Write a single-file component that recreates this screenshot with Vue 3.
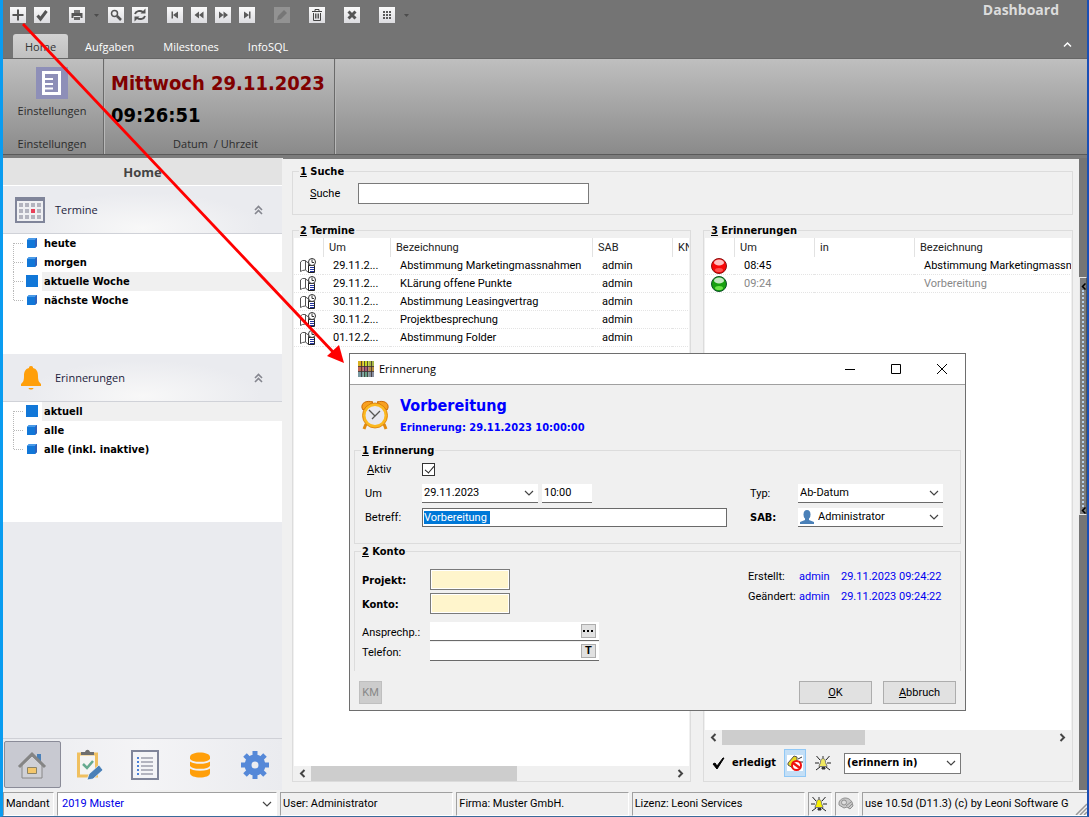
<script setup>
import { ref, onMounted } from 'vue'

const tools = [
  { label: 'Neu', d: 'M2.5 8h11M8 2.5v11', w: 2 },
  { label: 'Speichern', d: 'M3.5 8.5l3 3.5L12.5 4', w: 3 },
  { label: 'Drucken', kind: 'print', group: true },
  { label: 'Druckoptionen', kind: 'caret' },
  { label: 'Suchen', kind: 'search' },
  { label: 'Aktualisieren', kind: 'refresh' },
  { label: 'Erster', f: 'M4.5 4.500h1.500v7H4.500zM11 4.500v7L6 8z', group: true },
  { label: 'Zurück', f: 'M8 4.500v7L3.500 8zM12.500 4.500v7L8 8z' },
  { label: 'Vor', f: 'M4 4.500L8.500 8 4 11.500zM8.500 4.500L13 8l-4.500 3.500z' },
  { label: 'Letzter', f: 'M11.500 4.500H10v7h1.500zM5 4.500v7L10 8z' },
  { label: 'Bearbeiten', f: 'M3 13l1-4 6-6 3 3-6 6z', group: true, off: true },
  { label: 'Löschen', kind: 'trash', group: true },
  { label: 'Abbrechen', d: 'M4.5 4.5l7 7M11.5 4.5l-7 7', w: 3, group: true },
  { label: 'Raster', f: 'M4 4h2v2H4zM7 4h2v2H7zM10 4h2v2h-2zM4 7h2v2H4zM7 7h2v2H7zM10 7h2v2h-2zM4 10h2v2H4zM7 10h2v2H7zM10 10h2v2h-2z', group: true },
  { label: 'Rasteroptionen', kind: 'caret' },
]
const tabs = ['Home', 'Aufgaben', 'Milestones', 'InfoSQL']
const sections = [
  { title: 'Termine', icon: 'calendar', items: ['heute', 'morgen', 'aktuelle Woche', 'nächste Woche'], active: 2 },
  { title: 'Erinnerungen', icon: 'bell', items: ['aktuell', 'alle', 'alle (inkl. inaktive)'], active: 0 },
]
const termine = [
  ['29.11.2...', 'Abstimmung Marketingmassnahmen'],
  ['29.11.2...', 'KLärung offene Punkte'],
  ['30.11.2...', 'Abstimmung Leasingvertrag'],
  ['30.11.2...', 'Projektbesprechung'],
  ['01.12.2...', 'Abstimmung Folder'],
]
const dots = [0, 1, 2]
const cols = [0, 1, 2, 3]
const plaid = ['#d8b020', '#c8d820', '#a8b848', '#c06858', '#a85878', '#b89040', '#7898a0', '#68a088', '#8890a0']

const subject = ref('Vorbereitung ')
const subjectInput = ref(null)
onMounted(() => {
  subjectInput.value.focus()
  subjectInput.value.select()
})
</script>

<template>
  <div class="window">
    <header class="top">
      <div class="toolbar">
        <button
          v-for="t in tools"
          :key="t.label"
          :aria-label="t.label"
          :class="['tool', { group: t.group, off: t.off, caret: t.kind === 'caret' }]"
        >
          <svg v-if="t.kind === 'caret'" width="7" height="16" viewBox="0 0 7 16"><path d="M1 7h5L3.500 10z" fill="#4c4c4c" /></svg>
          <svg v-else width="16" height="16" viewBox="0 0 16 16">
            <path v-if="t.d" :d="t.d" :stroke-width="t.w" fill="none" stroke="#555" />
            <path v-else-if="t.f" :d="t.f" :fill="t.off ? '#767676' : '#5a5a5a'" />
            <g v-else-if="t.kind === 'print'">
              <path d="M5 3h6v3H5z" fill="#777" /><path d="M2.500 6h11v5h-2V9h-7v2h-2z" fill="#555" /><path d="M5 10h6v3H5z" fill="#666" />
            </g>
            <g v-else-if="t.kind === 'search'" fill="none" stroke="#555">
              <circle cx="6.500" cy="6.500" r="3" stroke-width="1.500" /><path d="M9 9l4 4" stroke-width="2.500" />
            </g>
            <g v-else-if="t.kind === 'refresh'" fill="none" stroke="#555" stroke-width="2">
              <path d="M3 7c1-3 5-4 8-2M13 9c-1 3-5 4-8 2" /><path d="M13.500 1.500v5h-5zM2.500 14.500v-5h5z" fill="#555" stroke="none" />
            </g>
            <g v-else fill="none" stroke="#444">
              <path d="M3 4.500h10M6 4V2.500h4V4M4.500 6v7.500h7V6" /><path d="M6.500 6.500v5M8 6.500v5M9.500 6.500v5" stroke-width=".9" />
            </g>
          </svg>
        </button>
        <h1>Dashboard</h1>
      </div>
      <nav class="tabs">
        <button v-for="(t, i) in tabs" :key="t" :class="{ active: i === 0 }">{{ t }}</button>
        <button class="fold" aria-label="Menüband reduzieren">
          <svg width="9" height="7" viewBox="0 0 9 7"><path d="M1 5.500l3.500-3.500L8 5.500" fill="none" stroke="#fff" stroke-width="1.500" /></svg>
        </button>
      </nav>
      <div class="ribbon">
        <div class="rgroup">
          <button class="settings">
            <svg width="32" height="32" viewBox="0 0 32 32">
              <path d="M0 0h32v32H0z" fill="#8e8fb8" />
              <path d="M7.500 5.500h16v21h-16z" fill="none" stroke="#fff" stroke-width="3" />
              <path d="M9 12h8M9 17h8M9 21.500h8" fill="none" stroke="#fff" stroke-width="2" />
            </svg>
            <span>Einstellungen</span>
          </button>
          <p>Einstellungen</p>
        </div>
        <div class="rgroup clock">
          <strong class="date">Mittwoch 29.11.2023</strong>
          <strong>09:26:51</strong>
          <p>Datum&nbsp; / Uhrzeit</p>
        </div>
      </div>
    </header>

    <div class="body">
      <aside class="side">
        <h2>Home</h2>
        <section v-for="s in sections" :key="s.title">
          <div class="shead">
            <svg v-if="s.icon === 'calendar'" width="30" height="28" viewBox="0 0 30 28">
              <path d="M1 2h28v24H1z" fill="#eff0f3" stroke="#80859a" stroke-width="2" /><path d="M0 1h30v4H0z" fill="#80859a" />
              <g v-for="r in dots" :key="r">
                <rect v-for="c in cols" :key="c" :x="4 + c * 6" :y="7 + r * 6" width="4" height="4" :fill="r === 1 && c === 2 ? '#e8405a' : '#b3b4bf'" />
              </g>
            </svg>
            <svg v-else width="30" height="28" viewBox="0 0 30 28">
              <path d="M16 2c-2 0-2 1-2 2-4 1-5 4-5 8 0 5-1 6-3 8v2h20v-2c-2-2-3-3-3-8 0-4-1-7-5-8 0-1 0-2-2-2z" fill="#ff9f0a" />
              <path d="M13.500 24h5c-.5 2-4.500 2-5 0z" fill="#ff9f0a" />
            </svg>
            <span>{{ s.title }}</span>
            <button :aria-label="s.title + ' einklappen'">
              <svg width="9" height="10" viewBox="0 0 9 10"><path d="M1 5l3.500-3.500L8 5M1 9l3.500-3.500L8 9" fill="none" stroke="#85868f" stroke-width="1.600" /></svg>
            </button>
          </div>
          <ul>
            <li v-for="(it, i) in s.items" :key="it">
              <svg width="13" height="19" viewBox="0 0 13 19">
                <path d="M1 9.500h9" stroke="#b8b8b8" stroke-dasharray="1 1" />
                <path :d="`M.5 ${i === 0 ? 9 : 0}V${i === s.items.length - 1 ? 10 : 19}`" stroke="#b8b8b8" stroke-dasharray="1 1" />
              </svg>
              <svg width="12" height="19" viewBox="0 0 12 19">
                <path v-if="i === s.active" d="M0 3h12v12H0z" fill="#1177d8" />
                <g v-else><path d="M1 6l2-2h8v8l-2 2H1z" fill="#1177d8" /><path d="M1 6l2-2h8L9 6z" fill="#4a9ae8" /><path d="M9 6l2-2v8l-2 2z" fill="#2f62bd" /></g>
              </svg>
              <a href="#" :class="{ active: i === s.active }">{{ it }}</a>
            </li>
          </ul>
        </section>
        <nav class="modules">
          <button class="active" aria-label="Home">
            <svg width="30" height="30" viewBox="0 0 30 30">
              <path d="M20 4h4v8l-4-3z" fill="#4a80b8" /><path d="M5 15v13h20V15L15 6z" fill="#cfd0d6" stroke="#888" />
              <path d="M2 17L15 4l13 13" fill="none" stroke="#858585" stroke-width="3" /><path d="M10.500 17.500h9v6h-9z" fill="#f4c76c" stroke="#8c8468" />
            </svg>
          </button>
          <button aria-label="Aufgaben">
            <svg width="30" height="32" viewBox="0 0 30 32">
              <path d="M3.500 5h18v22h-18z" fill="#f4f4f4" stroke="#f0c060" stroke-width="3" /><path d="M6 3h4c1-3 4-3 5 0h4v3H6z" fill="#6e6e6e" />
              <path d="M8 15l4 4 6-7" fill="none" stroke="#66aa90" stroke-width="2.500" /><path d="M12 31l2-6 10-9 4 5-10 9z" fill="#4a80b8" stroke="#fff" stroke-width=".7" />
            </svg>
          </button>
          <button aria-label="Listen">
            <svg width="28" height="30" viewBox="0 0 28 30">
              <path d="M1 1h26v28H1z" fill="#f4f4f7" stroke="#80859a" stroke-width="2" />
              <path d="M6 8h2M6 12h2M6 16h2M6 20h2M6 24h2" stroke="#4a80d8" stroke-width="2" /><path d="M10 8h12M10 12h12M10 16h12M10 20h12M10 24h12" stroke="#b3b4bf" stroke-width="2" />
            </svg>
          </button>
          <button aria-label="Datenbank">
            <svg width="22" height="26" viewBox="0 0 22 26">
              <path d="M1 5c0-6 20-6 20 0v16c0 6-20 6-20 0z" fill="#ff9f0a" /><path d="M0 7c2 5 20 5 22 0M0 14c2 5 20 5 22 0" fill="none" stroke="#f1f1f4" stroke-width="2" />
            </svg>
          </button>
          <button aria-label="Optionen">
            <svg width="28" height="28" viewBox="0 0 28 28">
              <circle cx="14" cy="14" r="7" fill="none" stroke="#5588d8" stroke-width="7" />
              <g stroke="#5588d8" stroke-width="5"><path d="M14 0v5M14 23v5M0 14h5M23 14h5M4 4l4 4M20 20l4 4M24 4l-4 4M8 20l-4 4" /></g>
            </svg>
          </button>
        </nav>
      </aside>

      <main>
        <fieldset class="search">
          <legend><u>1</u> Suche</legend>
          <div class="searchrow">
            <label for="suche"><u>S</u>uche</label>
            <input id="suche" type="text" />
          </div>
        </fieldset>

        <fieldset class="panel">
          <legend><u>2</u> Termine</legend>
          <div class="grid">
            <table>
              <colgroup><col class="w-icon" /><col class="w-um" /><col class="w-bez" /><col class="w-sab" /><col class="w-sab" /></colgroup>
              <thead><tr><th></th><th>Um</th><th>Bezeichnung</th><th>SAB</th><th>KN</th></tr></thead>
              <tbody>
                <tr v-for="(t, i) in termine" :key="i">
                  <td>
                    <svg width="16" height="16" viewBox="0 0 16 16">
                      <path d="M.5 13.500V4l2-1.500h3V12l-3 .5zM5.500 12l3 2.500V5l-3-2" fill="#fff" stroke="#555" />
                      <path d="M8.500 7.500h6v7h-6z" fill="#fff" stroke="#222" /><path d="M10 9.500h4M10 11.500h4M10 13.500h4" stroke="#2233a0" />
                      <circle cx="12" cy="4" r="3.500" fill="#fff" stroke="#333" /><path d="M12 1.500V4.500h2" fill="none" stroke="#333" />
                    </svg>
                  </td>
                  <td>{{ t[0] }}</td><td>{{ t[1] }}</td><td>admin</td><td></td>
                </tr>
              </tbody>
            </table>
          </div>
          <div class="scroll">
            <button aria-label="Links"><svg width="7" height="9" viewBox="0 0 7 9"><path d="M5.500 1L2 4.500 5.500 8" fill="none" stroke="#444" stroke-width="2" /></svg></button>
            <div class="track"><div class="thumb wide"></div></div>
            <button aria-label="Rechts"><svg width="7" height="9" viewBox="0 0 7 9"><path d="M1.500 1L5 4.500 1.500 8" fill="none" stroke="#444" stroke-width="2" /></svg></button>
          </div>
        </fieldset>

        <fieldset class="panel">
          <legend><u>3</u> Erinnerungen</legend>
          <div class="grid">
            <table>
              <colgroup><col class="w-icon" /><col class="w-sab" /><col class="w-in" /><col class="w-bez" /></colgroup>
              <thead><tr><th></th><th>Um</th><th>in</th><th>Bezeichnung</th></tr></thead>
              <tbody>
                <tr>
                  <td><svg width="16" height="16" viewBox="0 0 16 16"><circle cx="8" cy="8" r="7.500" fill="#f80808" stroke="#8a1010" /><ellipse cx="8" cy="4.500" rx="5" ry="3" fill="#fff" opacity=".75" /><ellipse cx="8" cy="12" rx="4" ry="2" fill="#ff8080" opacity=".6" /></svg></td>
                  <td>08:45</td><td></td><td>Abstimmung Marketingmassnahmen</td>
                </tr>
                <tr class="done">
                  <td><svg width="16" height="16" viewBox="0 0 16 16"><circle cx="8" cy="8" r="7.500" fill="#18a010" stroke="#0d5028" /><ellipse cx="8" cy="4.500" rx="5" ry="3" fill="#fff" opacity=".75" /><ellipse cx="8" cy="12" rx="4" ry="2" fill="#90ff60" opacity=".7" /></svg></td>
                  <td>09:24</td><td></td><td>Vorbereitung</td>
                </tr>
              </tbody>
            </table>
          </div>
          <div class="scroll">
            <button aria-label="Links"><svg width="7" height="9" viewBox="0 0 7 9"><path d="M5.500 1L2 4.500 5.500 8" fill="none" stroke="#444" stroke-width="2" /></svg></button>
            <div class="track"><div class="thumb"></div></div>
            <button aria-label="Rechts"><svg width="7" height="9" viewBox="0 0 7 9"><path d="M1.500 1L5 4.500 1.500 8" fill="none" stroke="#444" stroke-width="2" /></svg></button>
          </div>
          <div class="actions">
            <button class="donebtn">
              <svg width="13" height="13" viewBox="0 0 13 13"><path d="M1 7l2-1 2 3 6-8h1L5 12z" fill="#000" stroke="#000" /></svg>
              erledigt
            </button>
            <button class="mute" aria-label="Alarm aus">
              <svg width="18" height="18" viewBox="0 0 18 18">
                <path d="M1 1h16v16H1z" fill="#fff" /><path d="M2 9l6-7 3 1v10l-4 1-5-3z" fill="#e8d820" stroke="#555" />
                <path d="M12 5l4-2M13 8h4" stroke="#333" /><circle cx="10.500" cy="11.500" r="4.500" fill="#fff" stroke="#f01010" stroke-width="2" /><path d="M7 9l7 5" stroke="#f01010" stroke-width="2.500" />
              </svg>
            </button>
            <button class="alarm" aria-label="Alarm">
              <svg width="16" height="16" viewBox="0 0 16 16">
                <path d="M8 3.500c-2 0-2.500 2-2.500 4L4 11v.5h8V11l-1.500-3.500c0-2-.5-4-2.500-4z" fill="#f0e860" stroke="#777" /><path d="M7 12.500h3v1.500H7zM8 1v2" fill="#333" stroke="#333" />
                <path d="M1.500 1L5 5M14.500 1L11 5M0 8h4M12 8h4M1 15l4-3M15 15l-4-3" stroke="#222" />
              </svg>
            </button>
            <div class="combo boxed">
              <select aria-label="Erinnern in"><option>(erinnern in)</option></select>
              <svg class="chev" width="10" height="6" viewBox="0 0 10 6"><path d="M1 1l4 4 4-4" fill="none" stroke="#444" stroke-width="1.200" /></svg>
            </div>
          </div>
        </fieldset>
      </main>

      <div class="edge">
        <button class="splitter" aria-label="Seitenleiste">
          <svg width="5" height="7" viewBox="0 0 5 7"><path d="M4.500.5l-3 3 3 3" fill="none" stroke="#000" stroke-width="1.500" /></svg>
          <i></i>
          <svg width="5" height="7" viewBox="0 0 5 7"><path d="M4.500.5l-3 3 3 3" fill="none" stroke="#000" stroke-width="1.500" /></svg>
        </button>
      </div>
    </div>

    <footer class="status">
      <label class="cell" for="mandant">Mandant</label>
      <div class="cell combo">
        <select id="mandant"><option>2019 Muster</option></select>
        <svg class="chev" width="10" height="6" viewBox="0 0 10 6"><path d="M1 1l4 4 4-4" fill="none" stroke="#444" stroke-width="1.200" /></svg>
      </div>
      <span class="cell">User: Administrator</span>
      <span class="cell">Firma: Muster GmbH.</span>
      <span class="cell">Lizenz: Leoni Services</span>
      <span class="cell">
        <svg width="16" height="16" viewBox="0 0 16 16">
          <path d="M8 3.500c-2 0-2.500 2-2.500 4L4 11v.5h8V11l-1.500-3.500c0-2-.5-4-2.500-4z" fill="#f8f000" stroke="#777" /><path d="M7 12.500h3v1.500H7zM8 1v2" fill="#333" stroke="#333" />
          <path d="M1.500 1L5 5M14.500 1L11 5M0 8h4M12 8h4M1 15l4-3M15 15l-4-3" stroke="#222" />
        </svg>
      </span>
      <span class="cell">
        <svg width="16" height="14" viewBox="0 0 16 14">
          <path d="M1 6c0-3 4-5 6-5 3 0 5 1 7 4l1 4-3 3-3-2-3 1-5-3z" fill="#c8c8c8" stroke="#909090" /><circle cx="6" cy="5.500" r="2.500" fill="#ddd" stroke="#909090" /><path d="M8 9l5-4M10 11l4-4" stroke="#909090" />
        </svg>
      </span>
      <span class="cell last">
        <span>use 10.5d (D11.3) (c) by Leoni Software GmbH</span>
        <svg width="12" height="12" viewBox="0 0 12 12"><path d="M1 12L12 1M5 12l7-7M9 12l3-3" stroke="#999" stroke-width="1.500" /></svg>
      </span>
    </footer>

    <div class="dialog" role="dialog" aria-labelledby="dlg-title">
      <div class="title">
        <svg width="16" height="16" viewBox="0 0 16 16">
          <rect v-for="(c, i) in plaid" :key="i" :x="(i % 3) * 5.34" :y="Math.floor(i / 3) * 5.34" width="5.400" height="5.400" :fill="c" />
          <path d="M3.500 0v16M6.500 0v16M9.500 0v16M13.500 0v16M0 5.500h16M0 10.500h16" stroke="#3a3030" stroke-width=".8" />
        </svg>
        <span id="dlg-title">Erinnerung</span>
        <button aria-label="Minimieren"><svg width="12" height="12" viewBox="0 0 12 12"><path d="M1 6.500h10" stroke="#000" /></svg></button>
        <button aria-label="Maximieren"><svg width="12" height="12" viewBox="0 0 12 12"><path d="M1.500 1.500h9v9h-9z" fill="none" stroke="#000" /></svg></button>
        <button aria-label="Schließen"><svg width="12" height="12" viewBox="0 0 12 12"><path d="M1 1l10 10M11 1L1 11" stroke="#000" /></svg></button>
      </div>
      <div class="dhead">
        <svg width="30" height="32" viewBox="0 0 30 32">
          <path d="M6 25l-2 5M24 25l2 5" stroke="#e08a10" stroke-width="3" />
          <path d="M2 9c-1-5 4-8 11-6L3 11zM28 9c1-5-4-8-11-6l10 8z" fill="#f8a020" stroke="#c86a08" />
          <circle cx="15" cy="16.500" r="11" fill="#e8e8f0" stroke="#fbb820" stroke-width="3" /><circle cx="15" cy="16.500" r="12.500" fill="none" stroke="#d87808" stroke-width=".8" />
          <path d="M9 11l6 6 5-5M15 17l-3 3" fill="none" stroke="#555" stroke-width="1.300" />
        </svg>
        <div>
          <h3>Vorbereitung</h3>
          <b>Erinnerung: 29.11.2023 10:00:00</b>
        </div>
      </div>

      <fieldset class="f1">
        <legend><u>1</u> Erinnerung</legend>
        <div class="form">
          <label for="aktiv" class="left inset"><u>A</u>ktiv</label>
          <input id="aktiv" type="checkbox" checked />
          <label for="um" class="left">Um</label>
          <div class="pair">
            <div class="combo line">
              <input id="um" type="text" value="29.11.2023" />
              <svg class="chev" width="10" height="6" viewBox="0 0 10 6"><path d="M1 1l4 4 4-4" fill="none" stroke="#444" stroke-width="1.200" /></svg>
            </div>
            <input class="line time" type="text" value="10:00" aria-label="Uhrzeit" />
          </div>
          <label for="typ" class="right">Typ:</label>
          <div class="combo line">
            <select id="typ"><option>Ab-Datum</option></select>
            <svg class="chev" width="10" height="6" viewBox="0 0 10 6"><path d="M1 1l4 4 4-4" fill="none" stroke="#444" stroke-width="1.200" /></svg>
          </div>
          <label for="betreff" class="left">Betreff:</label>
          <input id="betreff" ref="subjectInput" v-model="subject" class="subject" type="text" />
          <label for="sab" class="right strong">SAB:</label>
          <div class="combo line user">
            <select id="sab"><option>Administrator</option></select>
            <svg class="person" width="14" height="14" viewBox="0 0 14 14"><ellipse cx="7" cy="4.500" rx="3.500" ry="4.500" fill="#4a80b8" /><path d="M5 8h4v2l5 2v2H0v-2l5-2z" fill="#4a80b8" /></svg>
            <svg class="chev" width="10" height="6" viewBox="0 0 10 6"><path d="M1 1l4 4 4-4" fill="none" stroke="#444" stroke-width="1.200" /></svg>
          </div>
        </div>
      </fieldset>

      <fieldset class="f2">
        <legend><u>2</u> Konto</legend>
        <div class="konto">
          <div class="fields">
            <label for="projekt" class="strong">Projekt:</label><input id="projekt" class="yellow" type="text" />
            <label for="konto" class="strong">Konto:</label><input id="konto" class="yellow" type="text" />
          </div>
          <div class="fields tight">
            <label for="anspr">Ansprechp.:</label>
            <div class="line lookup"><input id="anspr" type="text" /><button aria-label="Auswählen"><svg width="11" height="3" viewBox="0 0 11 3"><path d="M0 0h2v2H0zM4 0h2v2H4zM8 0h2v2H8z" /></svg></button></div>
            <label for="tel">Telefon:</label>
            <div class="line lookup"><input id="tel" type="text" /><button>T</button></div>
          </div>
          <dl>
            <dt>Erstellt:</dt><dd>admin</dd><dd>29.11.2023 09:24:22</dd>
            <dt>Geändert:</dt><dd>admin</dd><dd>29.11.2023 09:24:22</dd>
          </dl>
        </div>
      </fieldset>

      <div class="buttons">
        <button class="km" disabled>KM</button>
        <button class="std"><span><u>O</u>K</span></button>
        <button class="std"><span><u>A</u>bbruch</span></button>
      </div>
    </div>

    <svg class="arrow" width="360" height="380" viewBox="0 0 360 380">
      <path d="M23 24L334 353" stroke="#f00" stroke-width="2.800" />
      <path d="M344 363l-17-7 12-11z" fill="#f00" />
    </svg>
  </div>
</template>

<style>
html, body { margin: 0; background: #f0f0f0; }
</style>

<style scoped>
* { box-sizing: border-box; }
.window {
  --bold: "DejaVu Sans Condensed", "DejaVu Sans", sans-serif;
  --ui: "Open Sans", "Noto Sans", sans-serif;
  position: relative; display: flex; flex-direction: column; height: 100vh; min-height: 760px; overflow: hidden;
  background: #f0f0f0; border-left: 3px solid #0a9cf0; border-right: 2px solid #1a4fb4; border-bottom: 1px solid #3a6a9a;
  font: 11px/14px Roboto, "Liberation Sans", sans-serif; color: #000;
}
button { font: inherit; color: inherit; background: none; border: 0; padding: 0; display: flex; align-items: center; justify-content: center; }
input, select { font: inherit; color: inherit; border: 0; outline: 0; padding: 0 2px; margin: 0; background: #fff; min-width: 0; border-radius: 0; }
select { appearance: none; width: 100%; height: 100%; padding: 0 4px; }
h1, h2, h3, p, ul, dl, dd { margin: 0; padding: 0; }
svg { display: block; flex: none; }
fieldset { margin: 0; min-width: 0; border: 1px solid #dcdcdc; padding: 0; }
legend { height: 14px; margin-left: 6px; padding: 0 1px; font: bold 11px/16px var(--bold); }
.strong { font: bold 11px/14px var(--bold); }

.top { flex: none; background: #747474; border-bottom: 4px solid #7c7c7c; font-family: var(--ui); }
.toolbar { display: flex; gap: 8px; height: 34px; padding: 7px 28px 0 7px; align-items: flex-start; }
.tool { width: 16px; height: 16px; background: linear-gradient(#fafafa, #dcdce0); }
.tool.group { margin-left: 11px; }
.tool.off { background: #929292; }
.tool.caret { width: 7px; background: none; }
h1 { margin: -7px 0 0 auto; font-size: 14px; line-height: 20px; color: #dcdcdc; }
.tabs { display: flex; gap: 5px; height: 24px; padding: 0 8px 0 10px; }
.tabs button { padding: 2px 12px 0; color: #fff; border-radius: 3px 3px 0 0; }
.tabs .active { background: linear-gradient(#d2d2d2, #c0c0c0); color: #333; }
.tabs .fold { margin-left: auto; padding: 0; width: 24px; height: 20px; }
.ribbon { display: flex; height: 97px; border-top: 1px solid #666; border-bottom: 1px solid #5a5a5a; background: linear-gradient(#bfbfbf, #8a8a8a); color: #2c2c2c; }
.top { margin-bottom: -1px; }
.rgroup { display: flex; flex-direction: column; min-width: 101px; padding: 8px 2px 2px 0; border-right: 1px solid #6a6a6a; box-shadow: 1px 0 #b8b8b8; }
.rgroup p { margin-top: auto; text-align: center; line-height: 16px; }
.settings { flex-direction: column; gap: 4px; line-height: 16px; }
.clock { width: 231px; padding: 8px 14px 2px 7px; }
.clock strong { font: bold 20px/32px var(--bold); color: #000; white-space: nowrap; }
.clock .date { color: #800000; }

.body { flex: 1; display: flex; min-height: 0; }
.side { flex: none; width: 280px; display: flex; flex-direction: column; background: #eaebef; border-right: 1px solid #f0f0f0; }
h2 { flex: none; height: 28px; text-align: center; font: bold 13px/28px var(--ui); color: #444; background: #e3e3e3; border-bottom: 1px solid #fff; }
.shead { display: flex; align-items: center; height: 48px; padding: 0 19px 0 12px; background: radial-gradient(ellipse at 50% 90%, #f8f8f8, #eaebef 60%); border-bottom: 1px solid #d0d2d8; font-family: var(--ui); color: #1c1c3c; }
.shead span { margin-left: 10px; flex: 1; }
ul { list-style: none; height: 120px; background: #fff; }
li { display: flex; align-items: center; height: 19px; padding-left: 10px; }
li a { flex: 1; height: 19px; margin-left: 4px; padding-left: 2px; font: bold 11px/20px var(--bold); color: #000; text-decoration: none; }
li a.active { background: #f0f0f0; }
.modules { margin-top: auto; display: flex; height: 52px; padding: 2px 0; border-top: 1px solid #cfd0d6; background: linear-gradient(90deg, #eaebef, #f4f4f6 50%, #eaebef); }
.modules button { flex: 1; }
.modules .active { margin: 0 2px 0 1px; background: #c8c9d1; border: 1px solid #8a8b98; border-radius: 2px; }

main { flex: 1; min-width: 0; display: grid; grid-template-columns: 399fr 370fr; grid-template-rows: 51px 1fr; gap: 8px 12px; padding: 6px 6px 8px 9px; }
.search { grid-column: 1 / 3; }
.searchrow { display: flex; align-items: center; padding: 5px 0 0 17px; }
.search label { width: 48px; }
.search input { width: 231px; height: 21px; border: 1px solid #7a7a7a; }
.panel { display: flex; flex-direction: column; }
.grid { flex: 1; min-height: 0; margin: 1px 1px 0; overflow: hidden; background: #fff; }
table { table-layout: fixed; border-collapse: separate; border-spacing: 0; width: 1px; }
.w-icon { width: 29px; } .w-um { width: 67px; } .w-bez { width: 202px; } .w-sab { width: 80px; } .w-in { width: 100px; }
th { height: 19px; padding: 0 5px; text-align: left; font-weight: normal; border-left: 1px solid #e2e2e2; color: #222; }
th:first-child { border-left: 0; }
td { height: 18px; padding: 0 0 0 10px; white-space: nowrap; border-bottom: 1px dotted #e4e4e4; }
td:first-child { padding-left: 6px; }
.done { color: #888; }
.scroll { flex: none; display: flex; height: 15px; margin: 0 1px; }
.scroll button { width: 17px; }
.track { flex: 1; }
.thumb { width: 43%; height: 100%; background: #cdcdcd; }
.thumb.wide { width: 57%; }
.actions { flex: none; display: flex; align-items: center; height: 36px; padding-left: 8px; }
.donebtn { gap: 7px; font: bold 11px/14px var(--bold); }
.mute { width: 22px; height: 28px; margin: 0 9px 0 8px; background: #c4dff6; border: 1px solid #90c8f6; }
.combo { position: relative; }
.chev { position: absolute; right: 4px; top: 50%; margin-top: -3px; pointer-events: none; }
.boxed { width: 117px; height: 21px; margin-left: 13px; border: 1px solid #7a7a7a; font: bold 11px/14px var(--bold); }
.boxed select { padding-left: 2px; }

.edge { flex: none; width: 8px; background: #757575; display: flex; flex-direction: column; padding-top: 119px; }
.splitter { height: 238px; flex-direction: column; justify-content: flex-start; padding-top: 5px; border: 1px solid #e8e8e8; border-right-color: #555; background: #7c7c7c; }
.splitter i { flex: 1; width: 2px; border-left: 2px dotted #b8d0e8; }

.status { flex: none; display: grid; grid-template-columns: 51px 221fr 174fr 173fr 174fr 24px 24px 226fr; gap: 3px; height: 26px; padding-top: 2px; }
.cell { display: flex; align-items: center; min-width: 0; padding-left: 2px; border: 1px solid #fff; border-top-color: #a0a0a0; border-left-color: #a0a0a0; white-space: nowrap; overflow: hidden; }
.cell.combo { padding: 0; color: #0000e8; background: #fff; }
.last { border-right: 0; }
.last span { flex: 1; overflow: hidden; }
.last svg { align-self: flex-end; margin-left: 6px; }

.dialog { position: absolute; left: 346px; top: 353px; width: 617px; background: #f0f0f0; border: 1px solid #6e6e6e; }
.title { display: flex; align-items: center; height: 31px; padding-left: 8px; background: #fff; border-bottom: 1px solid #a0a0a0; font-family: var(--ui); }
.title span { flex: 1; margin-left: 5px; }
.title button { width: 46px; height: 30px; }
.dhead { display: flex; gap: 10px; height: 58px; padding: 11px 0 5px 10px; color: #00f; }
.dhead svg { margin-top: 3px; }
h3 { font: bold 16px/20px var(--bold); }
.dhead b { display: block; margin-top: 4px; font: bold 11px/16px var(--bold); }
.f1, .f2 { margin: 0 4px; }
.f1 { height: 101px; }
.form { display: grid; grid-template-columns: 57px 305px 71px 145px; grid-template-rows: 24px 24px 24px; align-items: center; padding-left: 10px; }
.form label, .fields label { padding-top: 2px; }
.form .left { grid-column: 1; }
.form .right { grid-column: 3; padding-left: 23px; }
.form .inset { padding-left: 2px; }
input[type="checkbox"] { appearance: none; width: 13px; height: 13px; border: 1px solid #333; background: #fff; padding: 0; position: relative; }
input[type="checkbox"]::after { content: ""; position: absolute; left: 4px; top: 0; width: 4px; height: 8px; border: solid #222; border-width: 0 1px 1px 0; transform: rotate(40deg); }
.pair { display: flex; gap: 4px; }
.pair .combo { width: 116px; }
.pair .combo input { width: 100%; height: 100%; }
.line { height: 19px; background: #fff; border-bottom: 1px solid #6a6a6a; }
.time { width: 50px; }
.subject { height: 19px; border: 1px solid #6a6a6a; padding: 0 1px; }
.subject::selection { background: #0078d7; color: #fff; }
.form select { padding-left: 2px; }
.form .user select { padding-left: 20px; }
.person { position: absolute; left: 2px; top: 2px; }
.f2 { height: 127px; border-bottom: 0; }
.konto { display: grid; grid-template-columns: 1fr auto; padding: 11px 16px 0 7px; row-gap: 8px; }
.fields { display: grid; grid-template-columns: 68px 80px; row-gap: 3px; align-items: center; grid-column: 1; }
.fields.tight { grid-template-columns: 68px 169px; row-gap: 1px; }
.yellow { height: 21px; background: #fff5cc; border: 1px solid #7a7a7a; box-shadow: inset 0 0 0 1px #fff; }
.lookup { display: flex; padding-right: 3px; }
.lookup input { flex: 1; }
.lookup button { width: 15px; height: 14px; margin-top: 2px; background: #e1e1e1; border: 1px solid #adadad; font-weight: bold; }
dl { grid-column: 2; grid-row: 1; display: grid; grid-template-columns: 51px 42px 103px; grid-auto-rows: 20px; line-height: 16px; }
dd { color: #0000f0; }
.buttons { display: flex; align-items: center; height: 39px; padding: 4px 9px 0; gap: 11px; }
.km { width: 23px; height: 23px; margin-right: auto; color: #888; background: #ccc; border: 1px solid #bfbfbf; }
.std { width: 73px; height: 23px; background: #e1e1e1; border: 1px solid #adadad; }
.arrow { position: absolute; left: -3px; top: 0; pointer-events: none; }
</style>
